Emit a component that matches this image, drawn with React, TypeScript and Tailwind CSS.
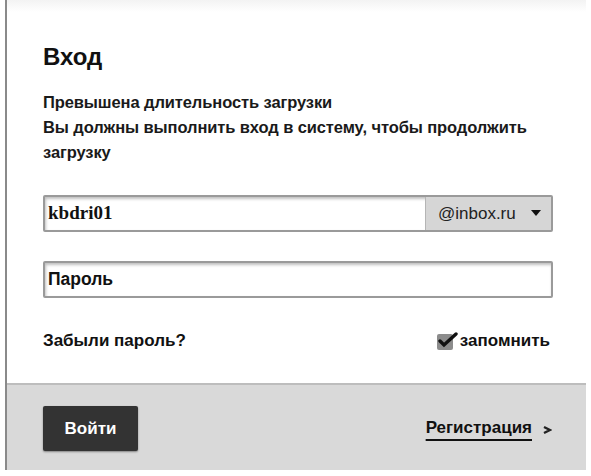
export default function App() {
  return (
    <div className="w-[591px] h-[476px] bg-white overflow-hidden" style={{ fontFamily: '"Liberation Sans", Arial, sans-serif' }}>
      <div className="ml-[5px] w-[581px] h-[470px] border-l-2 border-[#8a8a8a] flex flex-col">
        <div className="h-[12px] bg-gradient-to-b from-[#f3f3f3] to-white" />
        <div className="flex-1 pl-[36px] pr-[32px]">
          <h1 className="mt-[30px] text-[24px] font-bold text-[#111] leading-[30px]">Вход</h1>
          <div className="mt-[18px] text-[16.5px] font-bold text-[#1a1a1a] leading-[25px] tracking-[-0.1px]">
            <p>Превышена длительность загрузки</p>
            <p>Вы должны выполнить вход в систему, чтобы продолжить загрузку</p>
          </div>
          <div className="mt-[30px] flex h-[37px] w-[510px] border-2 border-[#9a9a9a] rounded-[2px] shadow-[inset_1px_2px_3px_rgba(0,0,0,0.25)]">
            <div className="flex-1 flex items-center pl-[3px] text-[19px] font-bold text-[#111]" style={{ fontFamily: '"Liberation Serif", "Times New Roman", serif' }}>
              kbdri01
            </div>
            <div className="w-[126px] flex items-center justify-between pl-[12px] pr-[10px] bg-[#d6d6d6] border-l border-[#b5b5b5] text-[17px] text-[#222]">
              <span>@inbox.ru</span>
              <svg width="10" height="7" viewBox="0 0 10 7"><path d="M0 0 L10 0 L5 6 Z" fill="#111" /></svg>
            </div>
          </div>
          <div className="mt-[29px] flex items-center h-[37px] w-[510px] border-2 border-[#9a9a9a] rounded-[2px] shadow-[inset_1px_2px_3px_rgba(0,0,0,0.25)] pl-[3px] text-[17.5px] font-bold text-[#111]">
            Пароль
          </div>
          <div className="mt-[30px] flex items-center justify-between w-[510px] text-[17px] font-bold text-[#111]">
            <span>Забыли пароль?</span>
            <span className="flex items-center gap-[2px] pr-[3px]">
              <svg width="22" height="20" viewBox="0 0 22 20">
                <rect x="1" y="3" width="16" height="16" rx="2" fill="#8c8c8c" />
                <path d="M4 10 L8 14 L20 3" stroke="#111" strokeWidth="3.4" fill="none" strokeLinecap="round" />
              </svg>
              запомнить
            </span>
          </div>
        </div>
        <div className="h-[87px] bg-[#d9d9d9] border-t-2 border-[#bdbdbd] flex items-center justify-between pl-[36px] pr-[34px]">
          <button className="w-[95px] h-[45px] mt-[2px] bg-[#333] rounded-[2px] text-white text-[17px] font-bold shadow-[0_1px_2px_rgba(0,0,0,0.4)]">
            Войти
          </button>
          <span className="flex items-center gap-[10px] text-[17px] font-bold text-[#111]">
            <span className="underline decoration-[2px] underline-offset-[6px]">Регистрация</span>
            <svg className="mt-[4px]" width="10" height="10" viewBox="0 0 10 10"><path d="M2 2 L8 5 L2 8" stroke="#222" strokeWidth="2.4" fill="none" /></svg>
          </span>
        </div>
      </div>
    </div>
  );
}
